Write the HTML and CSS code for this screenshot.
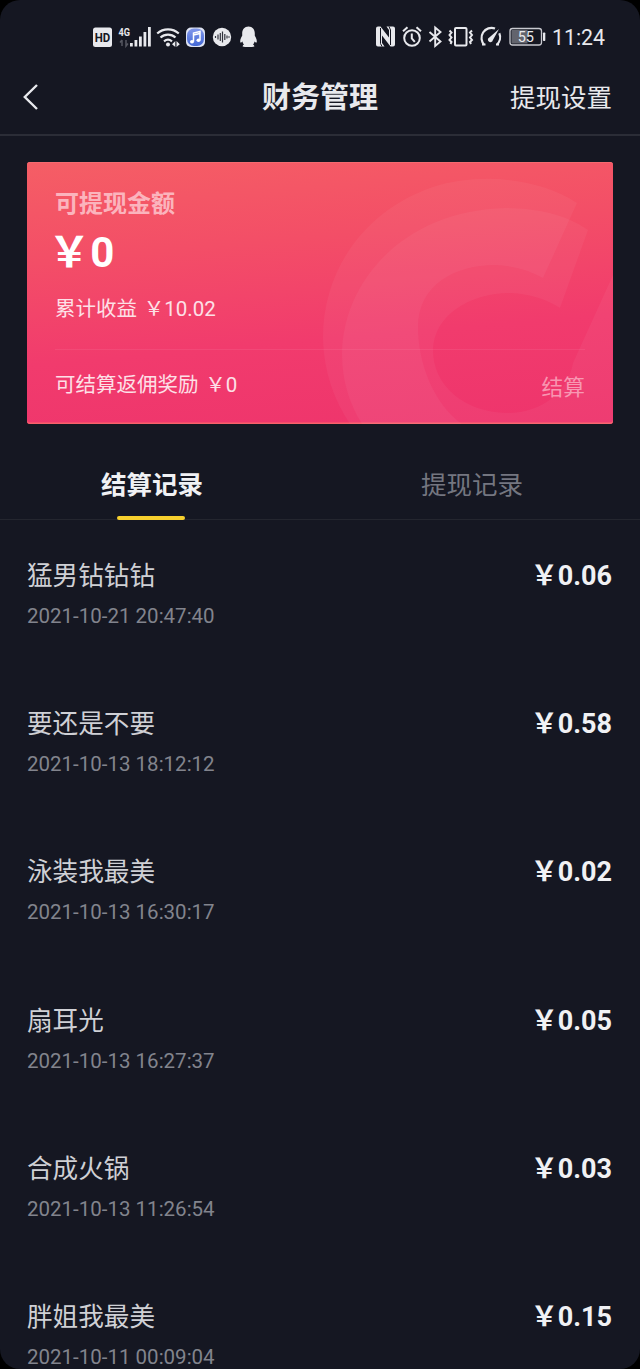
FILE: index.html
```html
<!DOCTYPE html>
<html lang="zh-CN">
<head>
<meta charset="utf-8">
<title>财务管理</title>
<link rel="stylesheet" href="styles.css">
</head>
<body>
<div class="screen">
  <div class="status">
    <div class="status-group">
      <svg width="25" height="24" viewBox="93 25 25 24"><rect x="93" y="27.500" width="19" height="19.500" rx="2.500" fill="#e8e9ed"/><text x="102.500" y="42" text-anchor="middle" class="hd" textLength="15.500" lengthAdjust="spacingAndGlyphs">HD</text></svg>
      <svg width="37" height="24" viewBox="118 25 37 24"><text x="118.500" y="35.500" class="net" textLength="11.500" lengthAdjust="spacingAndGlyphs">4G</text><path d="M122 40v6M120 42.500l2-2.500M126 40v6l2-2.500" stroke="#555761" stroke-width="1.500" fill="none"/><path d="M130 43h2.800v3.500H130zM134.500 40h2.800v6.500h-2.800zM139 36.500h2.800v10H139zM143.500 32h2.800v14.500h-2.800zM148 27h2.800v19.500H148z" fill="#e8e9ed"/></svg>
      <svg width="31" height="24" viewBox="155 25 31 24"><g fill="none" stroke="#e8e9ed" stroke-width="2.200"><path d="M157.200 33.500a16 16 0 0 1 21.600 0M160.500 37.500a11.200 11.200 0 0 1 15 0M164 41.300a6.300 6.300 0 0 1 8 0"/></g><circle cx="168" cy="44.500" r="2" fill="#e8e9ed"/><path d="M175.300 41v6l-3.300-2.700zM176.500 41v6l3.300-2.700z" fill="#e8e9ed"/></svg>
      <svg width="26" height="24" viewBox="186 25 26 24"><defs><linearGradient id="blue" x2="0" y2="1"><stop stop-color="#8298ec"/><stop offset="1" stop-color="#4267d4"/></linearGradient></defs><rect x="186" y="27.500" width="19" height="19.500" rx="5" fill="#dfe4f3"/><rect x="187" y="28.500" width="17" height="17.500" rx="7" fill="url(#blue)"/><path d="M193.500 41.500v-8.500l6.500-1.500v8.500M193.500 35l6.500-1.500" stroke="#fff" stroke-width="1.500" fill="none"/><ellipse cx="192" cy="41.700" rx="2" ry="1.700" fill="#fff"/><ellipse cx="198.500" cy="40.200" rx="2" ry="1.700" fill="#fff"/></svg>
      <svg width="28" height="24" viewBox="212 25 28 24"><circle cx="222" cy="37" r="9.200" fill="#e8e9ed"/><path d="M215.500 36v2M218 34.500v5M220.300 33v8M222.500 31.500v11M224.800 34v6M227 35.500v3M229 36.300v1.500" stroke="#30323c" stroke-width="1.200"/></svg>
      <svg width="18" height="24" viewBox="240 25 18 24"><path d="M248.500 26.500c-4 0-6.300 3-6.300 7v2.300c-1.300 2-2.300 4.200-1.900 6.600.8.300 1.600-.5 2.200-1 .2 1.400.8 2.300 1.500 3.100-1 .5-1.500 1.200-1.300 2 1.800.8 9.800.8 11.600 0 .2-.8-.3-1.500-1.300-2 .7-.8 1.300-1.700 1.500-3.100.6.500 1.400 1.300 2.200 1 .4-2.400-.6-4.600-1.900-6.600v-2.300c0-4-2.300-7-6.300-7z" fill="#e8e9ed"/></svg>
    </div>
    <div class="status-group">
      <svg width="27" height="24" viewBox="375 25 27 24"><path d="M378 26.500h2.500l8.500 11V30l-2.500-3.500h6.500q2 0 2 2V44.500q0 2-2 2h-2.500L382 35.500V43l2.500 3.500H378q-2 0-2-2v-16q0-2 2-2z" fill="#e8e9ed"/><path d="M380.500 28v15.500L382 46.500M390.500 45V30l-1.500-3.500" stroke="#151722" stroke-width="1" fill="none"/></svg>
      <svg width="26" height="24" viewBox="402 25 26 24"><g fill="none" stroke="#e8e9ed" stroke-width="2"><circle cx="412" cy="38" r="7.800"/><path d="M411.800 33.500v4.800l3 3.500M403 31.300l4.500-4M421 31.300l-4.500-4"/></g></svg>
      <svg width="20" height="24" viewBox="428 25 20 24"><path d="M429.500 32l11 9.500-5.300 4.500V27.500l5.300 4.500-11 9.500" fill="none" stroke="#e8e9ed" stroke-width="1.900"/></svg>
      <svg width="31" height="24" viewBox="448 25 31 24"><g fill="none" stroke="#e8e9ed" stroke-width="2"><rect x="455" y="28" width="11.500" height="17.500" rx="1"/><path d="M449.500 30.500l2 2-2 2.500 2 2.500-2 2.500 2 2-1 2M472 30.500l-2 2 2 2.500-2 2.500 2 2.500-2 2 1 2"/></g></svg>
      <svg width="30" height="24" viewBox="479 25 30 24"><g fill="none" stroke="#e8e9ed" stroke-width="2.200"><path d="M484.500 45a10 10 0 0 1 10.500-16.500M499.300 33.300a10 10 0 0 1-2.800 11.700M482 44.500h3.500M496 44.500h3"/></g><path d="M499 29l-6.200 11.200a2.500 2.500 0 1 1-3.500-2.800z" fill="#e8e9ed"/></svg>
      <svg width="43" height="24" viewBox="509 25 43 24"><rect x="510" y="28.500" width="31.500" height="16.500" rx="2.500" fill="none" stroke="#c8c9cf" stroke-width="1.300"/><rect x="511.500" y="30" width="16" height="13.500" fill="#62646d"/><rect x="543" y="32.500" width="2.300" height="8.500" rx=".8" fill="#e8e9ed"/><text x="525.800" y="42" text-anchor="middle" class="level">55</text></svg>
      <span class="clock">11:24</span>
    </div>
  </div>

  <header class="nav">
    <svg class="back" width="18" height="30" viewBox="22 83 18 30"><path d="M37 85L24.800 97L37 109" fill="none" stroke="#e8e9ed" stroke-width="2.400"/></svg>
    <h1 class="nav-title">财务管理</h1>
    <a class="nav-link">提现设置</a>
  </header>

  <section class="card">
    <svg class="card-mark" width="300" height="262" viewBox="313 162 300 262"><g fill="#fff" fill-opacity=".042"><path d="M577 203C540 178 480 172 433 187C365 210 322 270 323 340C324 372 334 400 350 424H462C435 405 418 365 418 327C418 285 455 265 495 265C515 266 530 271 543 278Z"/><path d="M588 230C565 214 535 208 505 208C400 211 342 285 342 355C342 381 350 405 362 424H613V275L573 363C568 392 542 413 507 413C463 412 433 385 433 350C434 315 470 293 510 293C530 294 546 299 560 308Z"/></g></svg>
    <div class="card-label">可提现金额</div>
    <div class="card-amount"><span class="yen">￥</span>0</div>
    <div class="card-total">累计收益<span class="yen inset">￥</span>10.02</div>
    <div class="card-foot">
      <div class="card-bonus">可结算返佣奖励<span class="yen inset">￥</span>0</div>
      <div class="settle">结算</div>
    </div>
  </section>

  <nav class="tabs">
    <div class="tab active">结算记录</div>
    <div class="tab">提现记录</div>
  </nav>

  <ul class="list">
    <li class="row"><div><div class="name">猛男钻钻钻</div><div class="date">2021-10-21 20:47:40</div></div><div class="sum"><span class="yen">￥</span>0.06</div></li>
    <li class="row"><div><div class="name">要还是不要</div><div class="date">2021-10-13 18:12:12</div></div><div class="sum"><span class="yen">￥</span>0.58</div></li>
    <li class="row"><div><div class="name">泳装我最美</div><div class="date">2021-10-13 16:30:17</div></div><div class="sum"><span class="yen">￥</span>0.02</div></li>
    <li class="row"><div><div class="name">扇耳光</div><div class="date">2021-10-13 16:27:37</div></div><div class="sum"><span class="yen">￥</span>0.05</div></li>
    <li class="row"><div><div class="name">合成火锅</div><div class="date">2021-10-13 11:26:54</div></div><div class="sum"><span class="yen">￥</span>0.03</div></li>
    <li class="row"><div><div class="name">胖姐我最美</div><div class="date">2021-10-11 00:09:04</div></div><div class="sum"><span class="yen">￥</span>0.15</div></li>
  </ul>
</div>
</body>
</html>
```
FILE: styles.css
```css
* { box-sizing: border-box; }
html { background: #000; }
body { margin: 0; background: #000; font-family: Roboto, "Noto Sans CJK SC", sans-serif; color: #e8e9ed; }
.screen { width: 640px; height: 1369px; overflow: hidden; background: #151722; border-radius: 20px; }

.status { display: flex; justify-content: space-between; height: 60px; padding: 25px 35px 0 93px; }
.status-group { display: flex; height: 24px; }
.status-group svg { flex: none; }
.hd { font: bold 12.500px Roboto, sans-serif; fill: #151722; }
.net { font: bold 11px Roboto, sans-serif; fill: #e8e9ed; }
.level { font: 14.500px Roboto, sans-serif; fill: #e8e9ed; }
.clock { font-size: 21.300px; line-height: 25px; white-space: nowrap; }

.nav { display: grid; grid-template-columns: 1fr auto 1fr; align-items: center; height: 76px; padding: 2px 28px 1px 22px; border-bottom: 2px solid #2b2d37; }
.nav-title { margin: 0 -3px 0 3px; font-size: 29px; line-height: 40px; font-weight: 700; }
.nav-link { justify-self: end; font-size: 25.500px; line-height: 40px; }

.card { position: relative; margin: 26px 27px 0; height: 262px; padding: 25px 28px 0; border-radius: 3px; overflow: hidden; color: #fff; background: linear-gradient(175deg, #f55e65 0%, #f34e67 32%, #f13b6d 65%, #ee346c 100%); box-shadow: inset 0 -1.500px #f8606a, inset 0 1px #f56a70; }
.card-mark { position: absolute; right: 0; top: 0; }
.card-label { font-size: 24px; line-height: 34px; font-weight: 700; color: #fbb4bd; }
.card-amount { height: 64px; font-size: 42px; line-height: 64px; font-weight: 700; }
.card-total { height: 32px; margin-top: 8px; font-size: 20.500px; line-height: 32px; color: #fde0e7; }
.card-foot { display: flex; justify-content: space-between; margin-top: 24px; padding-top: 19px; border-top: 1px solid rgba(255,255,255,.07); }
.card-bonus { font-size: 20.500px; height: 32px; line-height: 32px; color: #fde0e7; }
.settle { font-size: 21.700px; line-height: 38px; color: #f894b0; }

.yen { display: inline-block; margin: 0 0 0 -.16em; line-height: 1; font-family: "Noto Sans CJK SC", sans-serif; }
.inset { margin-left: .33em; }

.tabs { display: grid; grid-template-columns: 1fr 1fr; height: 96px; border-bottom: 1px solid #24262f; }
.tab { position: relative; padding: 41px 16px 0 0; text-align: center; font-size: 25.500px; line-height: 40px; color: #747680; }
.active { font-weight: 700; color: #f0f1f4; }
.active::after { content: ""; position: absolute; left: 50%; bottom: -1px; width: 68px; height: 4px; margin-left: -43px; border-radius: 2px; background: #f7d02e; }

.list { margin: 0; padding: 36px 28px 0 27px; list-style: none; }
.row { display: flex; justify-content: space-between; height: 148.200px; }
.name { font-size: 25.600px; line-height: 40px; color: #cfd0d5; }
.date { font-size: 20.500px; line-height: 40px; color: #82848d; }
.sum { font-size: 27px; line-height: 40px; font-weight: 700; color: #f0f1f4; }
```
